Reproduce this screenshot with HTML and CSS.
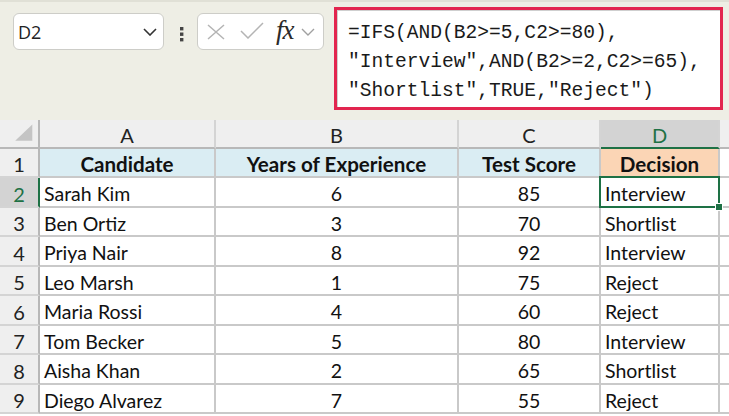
FILE: index.html
```html
<!DOCTYPE html>
<html lang="en">
<head>
<meta charset="UTF-8">
<meta name="viewport" content="width=device-width, initial-scale=1.0">
<title>IFS Formula - Decision Sheet</title>
<link rel="stylesheet" href="styles.css">
</head>
<body>
<div class="toolbar">
  <div class="namebox">
    <span>D2</span>
    <svg class="chev" width="14" height="8" viewBox="0 0 14 8"><path d="M1 1 L7 7 L13 1" fill="none" stroke="#333" stroke-width="1.6"/></svg>
  </div>
  <svg class="dots" width="4" height="16" viewBox="0 0 4 16"><rect x="0" y="1" width="3.4" height="3.4" fill="#444"/><rect x="0" y="6.5" width="3.4" height="3.4" fill="#444"/><rect x="0" y="12" width="3.4" height="3.4" fill="#444"/></svg>
  <div class="fxbox">
    <svg class="ic-x" width="18" height="16" viewBox="0 0 18 16"><path d="M1 1 L17 15 M17 1 L1 15" stroke="#b4b4b4" stroke-width="1.5" fill="none"/></svg>
    <svg class="ic-ok" width="24" height="17" viewBox="0 0 24 17"><path d="M1 9 L8 16 L23 1" stroke="#b4b4b4" stroke-width="1.5" fill="none"/></svg>
    <span class="fx">fx</span>
    <svg class="ic-down" width="14" height="8" viewBox="0 0 14 8"><path d="M1 1 L7 7 L13 1" fill="none" stroke="#a0a0a0" stroke-width="1.4"/></svg>
  </div>
  <div class="formula">
    <div class="formula-inner">=IFS(AND(B2&gt;=5,C2&gt;=80),
"Interview",AND(B2&gt;=2,C2&gt;=65),
"Shortlist",TRUE,"Reject")</div>
  </div>
</div>

<div class="sheet">
  <div class="c hd corner"><svg width="40" height="29" viewBox="0 0 40 29"><polygon points="34,5 16,22 34,22" fill="#c4c4c4"/></svg></div>
  <div class="c hd">A</div>
  <div class="c hd">B</div>
  <div class="c hd">C</div>
  <div class="c hd hd-sel">D</div>
  <div class="c hd edge"></div>

  <div class="c rh">1</div>
  <div class="c th">Candidate</div>
  <div class="c th">Years of Experience</div>
  <div class="c th">Test Score</div>
  <div class="c th th-dec">Decision</div>
  <div class="c edge"></div>

  <div class="c rh rh-sel">2</div>
  <div class="c">Sarah Kim</div>
  <div class="c num">6</div>
  <div class="c num">85</div>
  <div class="c sel">Interview</div>
  <div class="c edge"></div>

  <div class="c rh">3</div>
  <div class="c">Ben Ortiz</div>
  <div class="c num">3</div>
  <div class="c num">70</div>
  <div class="c">Shortlist</div>
  <div class="c edge"></div>

  <div class="c rh">4</div>
  <div class="c">Priya Nair</div>
  <div class="c num">8</div>
  <div class="c num">92</div>
  <div class="c">Interview</div>
  <div class="c edge"></div>

  <div class="c rh">5</div>
  <div class="c">Leo Marsh</div>
  <div class="c num">1</div>
  <div class="c num">75</div>
  <div class="c">Reject</div>
  <div class="c edge"></div>

  <div class="c rh">6</div>
  <div class="c">Maria Rossi</div>
  <div class="c num">4</div>
  <div class="c num">60</div>
  <div class="c">Reject</div>
  <div class="c edge"></div>

  <div class="c rh">7</div>
  <div class="c">Tom Becker</div>
  <div class="c num">5</div>
  <div class="c num">80</div>
  <div class="c">Interview</div>
  <div class="c edge"></div>

  <div class="c rh">8</div>
  <div class="c">Aisha Khan</div>
  <div class="c num">2</div>
  <div class="c num">65</div>
  <div class="c">Shortlist</div>
  <div class="c edge"></div>

  <div class="c rh">9</div>
  <div class="c">Diego Alvarez</div>
  <div class="c num">7</div>
  <div class="c num">55</div>
  <div class="c">Reject</div>
  <div class="c edge"></div>
</div>
</body>
</html>
```

FILE: styles.css
```css
body {
  margin: 0;
  width: 729px;
  height: 416px;
  overflow: hidden;
  background: #ffffff;
  font-family: 'Lato', 'Liberation Sans', sans-serif;
}

/* formula bar area */
.toolbar {
  height: 120px;
  box-sizing: border-box;
  background: #eeeee5;
  border-top: 2px solid #e0e0d6;
  display: flex;
  align-items: flex-start;
  padding-left: 13px;
}
.namebox {
  margin-top: 11px;
  width: 151px;
  height: 37px;
  box-sizing: border-box;
  background: #fff;
  border: 1px solid #cdcdc8;
  border-radius: 6px;
  display: flex;
  align-items: center;
  justify-content: space-between;
  padding: 0 6px 0 4px;
  font-family: 'Open Sans', sans-serif;
  font-size: 18px;
  color: #222;
}
.dots {
  margin: 24px 0 0 16px;
}
.fxbox {
  margin: 11px 0 0 13px;
  width: 127px;
  height: 37px;
  box-sizing: border-box;
  background: #fff;
  border: 1px solid #cdcdc8;
  border-radius: 6px;
  display: flex;
  align-items: center;
  padding-left: 9px;
}
.ic-x { margin-top: 1px; }
.ic-ok { margin-left: 15px; margin-top: -3px; }
.fx {
  margin-left: 12px;
  font-family: 'Liberation Serif', serif;
  font-style: italic;
  font-size: 27px;
  color: #2a2a2a;
  letter-spacing: -1px;
  line-height: 1;
  margin-top: -3px;
}
.ic-down { margin-left: 7px; margin-top: 1px; }

.formula {
  margin: 5px 0 0 10px;
  width: 389px;
  height: 103px;
  box-sizing: border-box;
  border: 3px solid #e2254f;
  background: #fff;
}
.formula-inner {
  height: 100%;
  box-sizing: border-box;
  border-top: 1px solid #cfcfcf;
  border-left: 1px solid #cfcfcf;
  padding: 8px 0 0 10px;
  white-space: pre;
  font-family: 'Liberation Mono', monospace;
  font-size: 19.6px;
  line-height: 29px;
  color: #1a1a1a;
}

/* spreadsheet grid */
.sheet {
  display: grid;
  grid-template-columns: 40px 176px 243px 142px 119px 9px;
  grid-template-rows: 29px 29px 30px 29px 30px 29px 30px 29px 30px 29px;
  font-size: 19.5px;
  color: #111;
}
.c {
  box-sizing: border-box;
  border-right: 2px solid #c9c9c9;
  border-bottom: 2px solid #c9c9c9;
  display: flex;
  align-items: center;
  padding: 3px 4px 0;
  white-space: nowrap;
  overflow: hidden;
}
.hd {
  background: #efefef;
  justify-content: center;
  border-right-color: #d4d4d4;
  border-bottom-color: #b8b8b8;
  color: #222;
  font-size: 20px;
}
.corner {
  padding: 0;
  border-right-color: #b8b8b8;
}
.hd-sel {
  background: #d3d3d3;
  color: #1e7145;
  border-bottom-color: #1e7145;
}
.edge {
  border-right: none;
  padding: 0;
}
.rh {
  background: #efefef;
  justify-content: center;
  border-right-color: #b8b8b8;
  border-bottom-color: #d4d4d4;
  color: #222;
  font-size: 20px;
}
.rh-sel {
  background: #d3d3d3;
  color: #1e7145;
  border-right-color: #1e7145;
}
.th {
  background: #daedf3;
  font-weight: bold;
  font-size: 20.6px;
  justify-content: center;
}
.th-dec {
  background: #fbd5b5;
}
.num {
  justify-content: center;
}
.sel {
  position: relative;
  overflow: visible;
}
.sel::after {
  content: "";
  position: absolute;
  left: -2px;
  top: -2px;
  right: -2px;
  bottom: -2px;
  border: 2px solid #1e7145;
}
.sel::before {
  content: "";
  position: absolute;
  right: -5px;
  bottom: -5px;
  width: 6px;
  height: 6px;
  background: #1e7145;
  border: 1px solid #fff;
  z-index: 2;
}
```
